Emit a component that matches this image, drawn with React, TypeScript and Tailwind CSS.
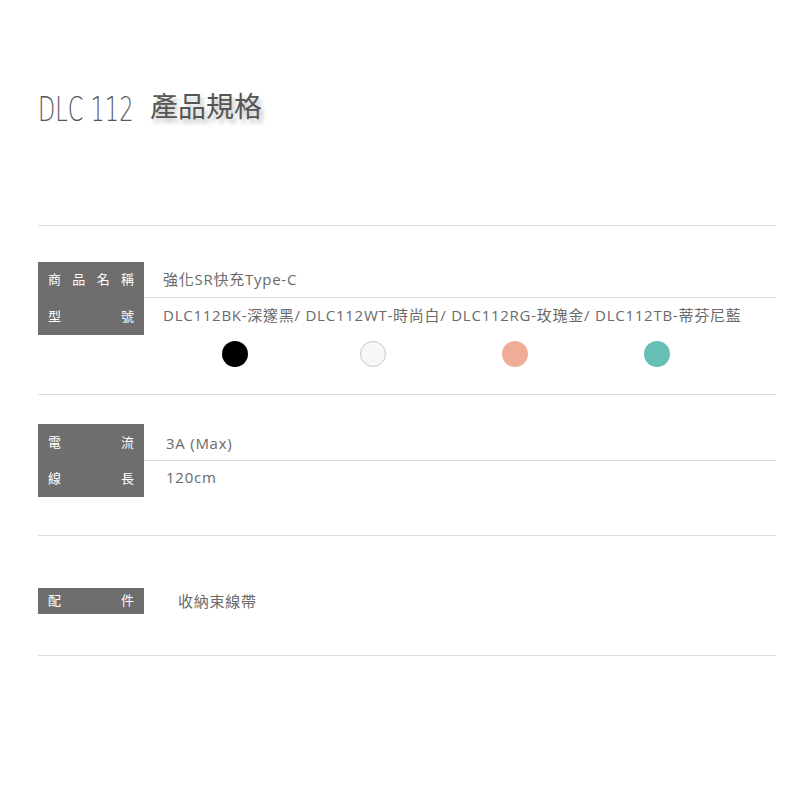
const font = {
  fontFamily: '"Open Sans", "Noto Sans CJK TC", sans-serif',
};

type Row = { label: string[]; value: string; divider?: boolean };

function SpecLabel({ chars, className }: { chars: string[]; className: string }) {
  return (
    <div
      className={`flex w-[106px] shrink-0 items-center justify-between bg-[#6e6e6e] px-[10px] text-[13px] text-white ${className}`}
    >
      {chars.map((c, i) => (
        <span key={i}>{c}</span>
      ))}
    </div>
  );
}

function SpecRow({
  row,
  height,
  indent,
}: {
  row: Row;
  height: string;
  indent: string;
}) {
  return (
    <div className="flex">
      <SpecLabel chars={row.label} className={height} />
      <div
        className={`flex flex-1 items-center text-[15px] tracking-[0.75px] text-[#6a6a6a] ${indent} ${
          row.divider ? "border-b border-[#dcdcdc]" : ""
        }`}
      >
        {row.value}
      </div>
    </div>
  );
}

const swatches = [
  { cls: "bg-black", ml: "ml-[78px]" },
  { cls: "bg-[#f7f7f7] border border-[#c8c8c8]", ml: "ml-[112px]" },
  { cls: "bg-[#efac97]", ml: "ml-[116px]" },
  { cls: "bg-[#66bfb4]", ml: "ml-[116px]" },
];

export default function App() {
  return (
    <div className="h-[800px] w-[800px] bg-white" style={font}>
      <div className="flex h-[225px] items-start pl-[38px] pt-[93px]">
        <div className="w-[112px]">
          <span
            className="inline-block origin-left scale-x-[0.68] whitespace-nowrap text-[33px] leading-none text-[#555]"
            style={{ fontFamily: '"DejaVu Sans", sans-serif', fontWeight: 200 }}
          >
            DLC 112
          </span>
        </div>
        <span
          className="-mt-[2px] text-[28px] leading-none text-[#555] [text-shadow:3px_4px_4px_rgba(0,0,0,0.25)]"
          style={{ fontFamily: '"Noto Sans CJK TC", sans-serif' }}
        >
          產品規格
        </span>
      </div>

      <div className="ml-[38px] w-[738px]">
        {/* section 1 */}
        <section className="border-t border-[#dcdcdc] pb-[27px] pt-[36px]">
          <SpecRow
            row={{ label: ["商", "品", "名", "稱"], value: "強化SR快充Type-C", divider: true }}
            height="h-[36px]"
            indent="pl-[19px]"
          />
          <SpecRow
            row={{
              label: ["型", "號"],
              value:
                "DLC112BK-深邃黑/ DLC112WT-時尚白/ DLC112RG-玫瑰金/ DLC112TB-蒂芬尼藍",
            }}
            height="h-[37px]"
            indent="pl-[19px] pb-[3px]"
          />
          <div className="mt-[6px] flex pl-[106px]">
            {swatches.map((s, i) => (
              <div key={i} className={`h-[26px] w-[26px] rounded-full ${s.cls} ${s.ml}`} />
            ))}
          </div>
        </section>

        {/* section 2 */}
        <section className="border-t border-[#dcdcdc] pb-[38px] pt-[29px]">
          <SpecRow
            row={{ label: ["電", "流"], value: "3A (Max)", divider: true }}
            height="h-[37px]"
            indent="pl-[22px] pt-[3px]"
          />
          <SpecRow
            row={{ label: ["線", "長"], value: "120cm" }}
            height="h-[36px]"
            indent="pl-[22px] pb-[4px]"
          />
        </section>

        {/* section 3 */}
        <section className="border-t border-[#dcdcdc] pb-[41px] pt-[52px]">
          <SpecRow
            row={{ label: ["配", "件"], value: "收納束線帶" }}
            height="h-[26px]"
            indent="pl-[34px]"
          />
        </section>
        <div className="border-t border-[#dcdcdc]" />
      </div>
    </div>
  );
}
